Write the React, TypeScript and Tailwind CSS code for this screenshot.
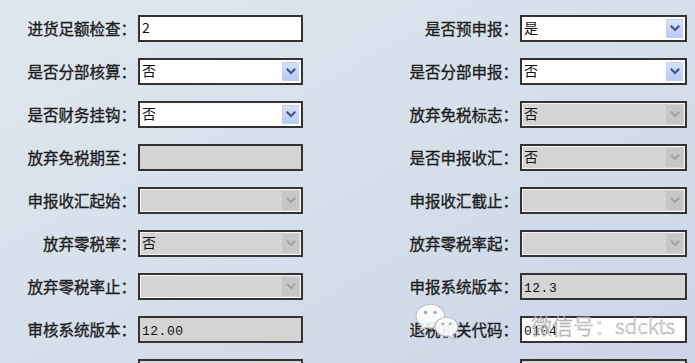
import React from "react";

type Field =
  | { kind: "text"; value?: string; disabled?: boolean; mono?: boolean }
  | { kind: "select"; value?: string; disabled?: boolean };

type Row = { l: string; lf: Field; r: string; rf: Field };

const rows: Row[] = [
  { l: "进货足额检查：", lf: { kind: "text", value: "2" }, r: "是否预申报：", rf: { kind: "select", value: "是" } },
  { l: "是否分部核算：", lf: { kind: "select", value: "否" }, r: "是否分部申报：", rf: { kind: "select", value: "否" } },
  { l: "是否财务挂钩：", lf: { kind: "select", value: "否" }, r: "放弃免税标志：", rf: { kind: "select", value: "否", disabled: true } },
  { l: "放弃免税期至：", lf: { kind: "text", disabled: true }, r: "是否申报收汇：", rf: { kind: "select", value: "否", disabled: true } },
  { l: "申报收汇起始：", lf: { kind: "select", disabled: true }, r: "申报收汇截止：", rf: { kind: "select", disabled: true } },
  { l: "放弃零税率：", lf: { kind: "select", value: "否", disabled: true }, r: "放弃零税率起：", rf: { kind: "select", disabled: true } },
  { l: "放弃零税率止：", lf: { kind: "select", disabled: true }, r: "申报系统版本：", rf: { kind: "text", value: "12.3", disabled: true, mono: true } },
  { l: "审核系统版本：", lf: { kind: "text", value: "12.00", disabled: true, mono: true }, r: "退税机关代码：", rf: { kind: "text", value: "0104", mono: true } },
  { l: "", lf: { kind: "text", disabled: true }, r: "", rf: { kind: "text", disabled: true } },
];

const cjk = "font-['Noto_Sans_CJK_SC','Noto_Sans',sans-serif]";
const mono = "font-['Liberation_Mono','DejaVu_Sans_Mono',monospace]";

function Chevron({ color }: { color: string }) {
  return (
    <svg width="10" height="7" viewBox="0 0 10 7">
      <path d="M1.5 1.5 L5 5 L8.5 1.5" fill="none" stroke={color} strokeWidth="2.2" strokeLinecap="square" />
    </svg>
  );
}

function Box({ f, w }: { f: Field; w: string }) {
  const bg = f.disabled ? "bg-[#d4d4d4]" : "bg-white";
  const inner = f.disabled && f.kind === "select" ? "shadow-[inset_1px_1px_0_#f4f4f4,inset_-1px_-1px_0_#f4f4f4]" : "";
  return (
    <div className={`${w} h-[27px] shrink-0 border-2 border-[#333333] ${bg} ${inner} flex items-start relative`}>
      <span
        className={`${f.kind === "text" && (f as any).mono ? mono + " text-[13px] pt-[4px] tracking-[0.5px]" : cjk + " text-[14px] leading-[18px] pt-[1px]"} pl-[2px] text-[#111]`}
      >
        {f.value ?? ""}
      </span>
      {f.kind === "select" && (
        <div
          className={`absolute right-[2px] top-[2px] w-[17px] h-[19px] flex items-center justify-center ${
            f.disabled
              ? "bg-[#c6c6c6]"
              : "bg-gradient-to-b from-[#d6e2fb] to-[#b9caf2] border border-[#c2d0ee]"
          }`}
        >
          <Chevron color={f.disabled ? "#a3a3a3" : "#42568a"} />
        </div>
      )}
    </div>
  );
}

function WeChatLogo() {
  return (
    <svg width="50" height="40" viewBox="0 0 52 42">
      <ellipse cx="18" cy="16" rx="15" ry="12.5" fill="#ffffff" fillOpacity="0.85" stroke="#bdbdbd" strokeWidth="1.1" />
      <path d="M9 25 L7 31 L14 27" fill="#ffffff" fillOpacity="0.85" stroke="#bdbdbd" strokeWidth="1.1" />
      <circle cx="13" cy="12" r="1.8" fill="#aaaaaa" />
      <circle cx="23" cy="12" r="1.8" fill="#aaaaaa" />
      <ellipse cx="35" cy="27" rx="12" ry="10" fill="#ffffff" fillOpacity="0.92" stroke="#bdbdbd" strokeWidth="1.1" />
      <path d="M41 35 L44 40 L37 36.5" fill="#ffffff" fillOpacity="0.92" stroke="#bdbdbd" strokeWidth="1.1" />
      <circle cx="31" cy="24" r="1.5" fill="#aaaaaa" />
      <circle cx="39" cy="24" r="1.5" fill="#aaaaaa" />
    </svg>
  );
}

const label = `text-right ${cjk} text-[15.5px] text-[#1c1c1c] whitespace-nowrap [-webkit-text-stroke:0.35px_#1c1c1c]`;

export default function App() {
  return (
    <div className="w-[695px] h-[363px] overflow-hidden relative bg-gradient-to-br from-[#dfe7ee] via-[#d6e0eb] to-[#ccd5e7]">
      <div className="flex flex-col gap-[16px] pt-[15px]">
        {rows.map((r, i) => (
          <div key={i} className="flex items-center h-[27px]">
            <div className={`w-[136px] ${label}`}>{r.l}</div>
            <div className="ml-[2px]">
              <Box f={r.lf} w="w-[165px]" />
            </div>
            <div className={`w-[215px] ${label}`}>{r.r}</div>
            <div className="ml-[2px]">
              <Box f={r.rf} w="w-[167px]" />
            </div>
          </div>
        ))}
      </div>
      <div className="absolute left-[413px] top-[301px]">
        <WeChatLogo />
      </div>
      <div
        className={`absolute left-[531px] top-[311px] ${cjk} text-[21px] leading-[28px] font-light text-white/55 [-webkit-text-stroke:0.6px_#a8a8a8] whitespace-nowrap`}
      >
        微信号：sdckts
      </div>
    </div>
  );
}
